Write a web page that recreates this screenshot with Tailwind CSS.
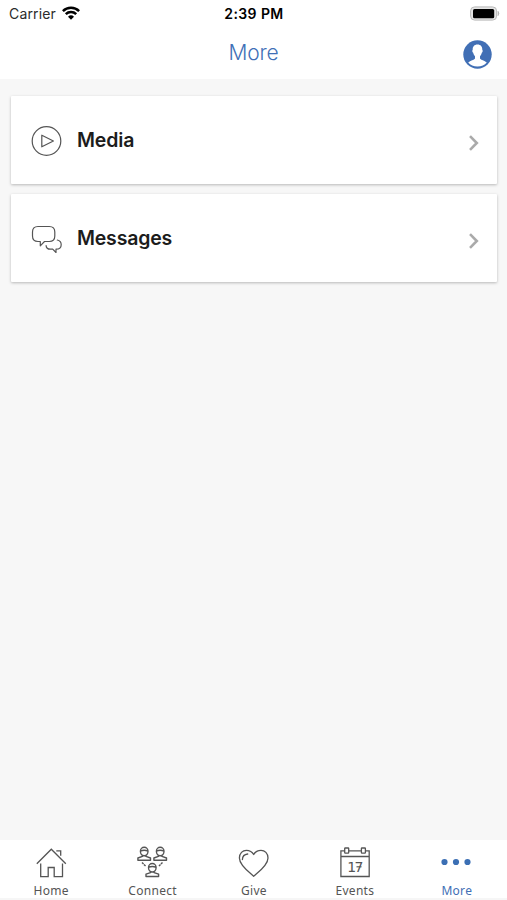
<!DOCTYPE html>
<html lang="en">
<head>
    <meta charset="utf-8">
    <title>More</title>
    <script src="https://cdn.jsdelivr.net/npm/@tailwindcss/browser@4"></script>
</head>
<body class="h-screen flex flex-col overflow-hidden bg-[#f7f7f7] font-['Inter',sans-serif] text-[#1c1c1c]">
    <header class="h-[79px] shrink-0 bg-white">
        <div class="grid grid-cols-3 items-center h-7 pl-[9px] pr-[7px]">
            <div class="flex items-center gap-[6px]">
                <span class="text-[14px] leading-7 tracking-[0.15px] text-[#2b2b2b]">Carrier</span>
                <svg class="w-[18px] h-[14px] -mt-[2px]" viewBox="0 0 18 14" fill="none" stroke="#000" stroke-width="2.5">
                    <path d="M.9 5.1a11.5 11.5 0 0 1 16.2 0M3.8 8.2a7.4 7.4 0 0 1 10.4 0" />
                    <path d="M9 13.8L6 10.8a4.3 4.3 0 0 1 6 0z" fill="#000" stroke="none" />
                </svg>
            </div>
            <div class="-ml-px text-center text-[14px] font-semibold leading-7 tracking-[0.4px] text-black whitespace-nowrap">2:39 PM</div>
            <svg class="w-[31px] h-[15px] justify-self-end -mt-px" viewBox="0 0 31 15">
                <rect x="1.6" y=".9" width="26" height="13.2" rx="4" fill="#e4e4e4" stroke="#b9b9b9" />
                <rect x="4" y="3" width="21.2" height="9.2" rx="1.5" fill="#000" />
                <path d="M29 5.3q1.8 2.2 0 4.4z" fill="#999" stroke="#aaa" stroke-width=".6" />
            </svg>
        </div>
        <div class="grid grid-cols-3 items-center h-[51px] px-[15px]">
            <h1 class="col-start-2 -mt-[2px] text-center text-[21px] font-light leading-7 tracking-[-0.2px] text-[#3f70b7]">More</h1>
            <svg class="w-[29px] h-[29px] justify-self-end mt-[2px]" viewBox="0 0 29 29">
                <circle cx="14.5" cy="14.5" r="14.2" fill="#416fb5" />
                <path d="M14.5 4.5c-3.2 0-4.9 2.1-4.8 5.2-.8.5-.3 2.8.5 3.1.3 1.6 1 2.7 1.8 3.5v2.1c-.8 1.6-4.7 2-6.8 4.1 2.2 2.4 5.4 4 9.3 4s7.1-1.6 9.3-4c-2.1-2.1-6-2.500-6.800-4.100v-2.100c.8-.8 1.500-1.900 1.800-3.500.8-.3 1.300-2.600.5-3.100.1-3.100-1.600-5.200-4.800-5.200z" fill="#fff" />
            </svg>
        </div>
    </header>

    <main class="flex-1 flex flex-col gap-[10px] pt-[17px] pl-[11px] pr-[10px]">
        <a class="flex items-center h-[88px] pl-5 pr-[17px] rounded-[1px] bg-white shadow-[0_1px_3px_rgba(0,0,0,0.26)]">
            <svg class="w-8 h-8 mt-[2px]" viewBox="0 0 32 32" fill="none" stroke="#555" stroke-width="1.2">
                <circle cx="15.5" cy="16" r="14.3" />
                <path d="M10.8 10.2v11.6L22.4 16z" stroke-linejoin="round" />
            </svg>
            <span class="ml-[14px] text-[19.5px] leading-7 font-semibold tracking-[-0.15px]">Media</span>
            <svg class="ml-auto mt-[6px] w-3 h-4" viewBox="0 0 12 16" fill="none" stroke="#aaa" stroke-width="2.6">
                <path d="M2 1.2L8.8 8L2 14.8" />
            </svg>
        </a>
        <a class="flex items-center h-[88px] pl-5 pr-[17px] rounded-[1px] bg-white shadow-[0_1px_3px_rgba(0,0,0,0.26)]">
            <svg class="w-8 h-8 mt-[2px]" viewBox="0 0 32 32" fill="none" stroke="#555" stroke-width="1.2" stroke-linejoin="round" stroke-linecap="round">
                <path d="M7 3.500h11.300q5.500 0 5.500 5.500v4q0 5.500-5.500 5.500h-4.800l-4.200 4.300v-4.300H7q-5.500 0-5.500-5.500V9q0-5.500 5.500-5.500z" />
                <path d="M26.300 17q3.900.8 3.900 4.700 0 4.500-5.200 4.500v3.300l-3.300-3.300h-2.400q-4 0-4.200-3.600" />
            </svg>
            <span class="ml-[14px] text-[19.5px] leading-7 font-semibold tracking-[-0.2px]">Messages</span>
            <svg class="ml-auto mt-[6px] w-3 h-4" viewBox="0 0 12 16" fill="none" stroke="#aaa" stroke-width="2.6">
                <path d="M2 1.2L8.8 8L2 14.8" />
            </svg>
        </a>
    </main>

    <nav class="grid grid-cols-5 h-[60px] shrink-0 pt-[5px] bg-white border-b-2 border-[#f6f6f6] font-['Noto_Sans',sans-serif] text-[12px] leading-4 tracking-[0.3px] text-[#555]">
        <a class="flex flex-col items-center gap-[4px]">
            <svg class="w-[34px] h-[34px]" viewBox="0 0 34 34" fill="none" stroke="#555" stroke-width="1.3">
                <path d="M2.8 18.700L17.300 4.200L31.800 18.700M22.300 5.800h4.400v5M6.700 18.500v13.200h7.500v-9.200h6v9.200h8.300V18.500" />
            </svg>
            <span class="pl-px">Home</span>
        </a>
        <a class="flex flex-col items-center gap-[4px]">
            <svg class="w-[34px] h-[34px]" viewBox="0 0 34 34" fill="none" stroke="#555" stroke-width="1.4" stroke-linejoin="round">
                <defs>
                    <g id="person">
                        <path d="M3.200 4.800a3.800 4 0 0 1 7.600 0c0 2.500-1.700 4.500-3.800 4.500s-3.800-2-3.800-4.500zM3.200 4.700q3.800-1.800 7.600 0M5.200 9v.9L.7 11.500v2.300h12.600v-2.300L8.800 9.900V9" />
                    </g>
                </defs>
                <use href="#person" x="2.200" y="1.500" />
                <use href="#person" x="18.200" y="1.500" />
                <use href="#person" x="10.300" y="17.700" />
                <path d="M7 17.500l3.700 3.700M27.500 17.500l-3.700 3.700" stroke-dasharray="2.200 .6" />
            </svg>
            <span class="pl-px">Connect</span>
        </a>
        <a class="flex flex-col items-center gap-[4px]">
            <svg class="w-[34px] h-[34px]" viewBox="0 0 34 34" fill="none" stroke="#555" stroke-width="1.3" stroke-linecap="round">
                <path d="M17.700 31.200C13.500 27.500 3.400 20.500 3.400 13c0-4.800 3.200-7.700 7-7.700 3.300 0 5.700 1.300 7.300 4.200 1.600-2.900 4-4.200 7.300-4.200 3.800 0 7 2.900 7 7.700 0 7.500-10.100 14.500-14.300 18.200z" stroke-linejoin="round" />
                <path d="M6.400 14.500q.1-4.900 5.300-5.500" />
            </svg>
            <span class="pl-px">Give</span>
        </a>
        <a class="flex flex-col items-center gap-[4px]">
            <svg class="w-[34px] h-[34px]" viewBox="0 0 34 34" fill="none" stroke="#555" stroke-width="1.3">
                <path d="M6.700 5.800H2.900v25.700h28.300V5.800h-3.800M10.700 5.800h12.700M2.900 11.500h28.300" />
                <rect x="6.700" y="3" width="4" height="5.200" rx=".6" />
                <rect x="23.400" y="3" width="4" height="5.200" rx=".6" />
                <text x="16.500" y="26.800" text-anchor="middle" font-family="DejaVu Sans, sans-serif" font-size="14" letter-spacing="-1.600" fill="#555" stroke="none">17</text>
                <path d="M18.500 21.800h5" stroke-width="1.100" />
            </svg>
            Events
        </a>
        <a class="flex flex-col items-center gap-[4px] text-[#416fb5]">
            <svg class="w-[34px] h-[34px]" viewBox="0 0 34 34" fill="#3b6fb4">
                <circle cx="5.500" cy="17" r="3.100" />
                <circle cx="17" cy="17" r="3.100" />
                <circle cx="28.500" cy="17" r="3.100" />
            </svg>
            <span class="pl-px">More</span>
        </a>
    </nav>
</body>
</html>
